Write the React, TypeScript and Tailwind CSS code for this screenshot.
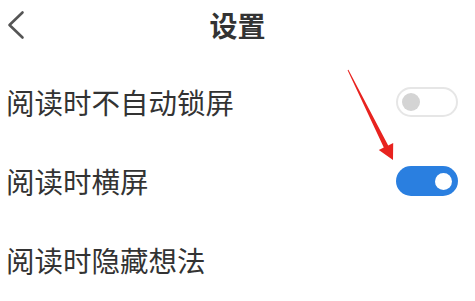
type Row = {
  label: string;
  toggle?: "on" | "off";
  height: string;
};

const ROWS: Row[] = [
  { label: "阅读时不自动锁屏", toggle: "off", height: "h-[80px]" },
  { label: "阅读时横屏", toggle: "on", height: "h-[78px]" },
  { label: "阅读时隐藏想法", height: "h-[80px]" },
];

function Toggle({ on }: { on: boolean }) {
  if (on) {
    return (
      <div className="flex h-[30px] w-[62px] items-center justify-end rounded-full bg-[#2a7fe0] pr-[6px]">
        <div className="h-[17px] w-[17px] rounded-full bg-white" />
      </div>
    );
  }
  return (
    <div className="flex h-[30px] w-[62px] items-center rounded-full border-2 border-[#e6e6e6] bg-white pl-[4px]">
      <div className="h-[18px] w-[18px] rounded-full bg-[#d4d4d4]" />
    </div>
  );
}

export default function App() {
  return (
    <div
      className="relative h-[301px] w-[475px] overflow-hidden bg-white text-[#333]"
      style={{ fontFamily: '"Noto Sans CJK SC", "Noto Sans", sans-serif' }}
    >
      <header className="relative flex h-[50px] items-center justify-center">
        <svg className="absolute left-[4px] top-[8px]" width="24" height="34" viewBox="0 0 24 34">
          <polyline
            points="18.5,4.5 5.5,17 18.5,29.5"
            fill="none"
            stroke="#555"
            strokeWidth="2.6"
            strokeLinecap="round"
            strokeLinejoin="round"
          />
        </svg>
        <h1 className="text-[28px] font-bold leading-[28px] text-[#333]">设置</h1>
      </header>

      <div className="flex flex-col pt-[12px]">
        {ROWS.map((row) => (
          <div key={row.label} className={`flex items-center justify-between pl-[6px] pr-[17px] ${row.height}`}>
            <span className="text-[28.5px] leading-[28px]">{row.label}</span>
            {row.toggle && <Toggle on={row.toggle === "on"} />}
          </div>
        ))}
      </div>

      {/* red annotation arrow */}
      <svg className="pointer-events-none absolute left-0 top-0" width="475" height="301" viewBox="0 0 475 301">
        <polygon
          points="348.4,69.8 388.2,145.4 393.2,142.9 393,160 378.8,150.1 383.8,147.6 347.6,70.2"
          fill="#e8231f"
        />
      </svg>
    </div>
  );
}
